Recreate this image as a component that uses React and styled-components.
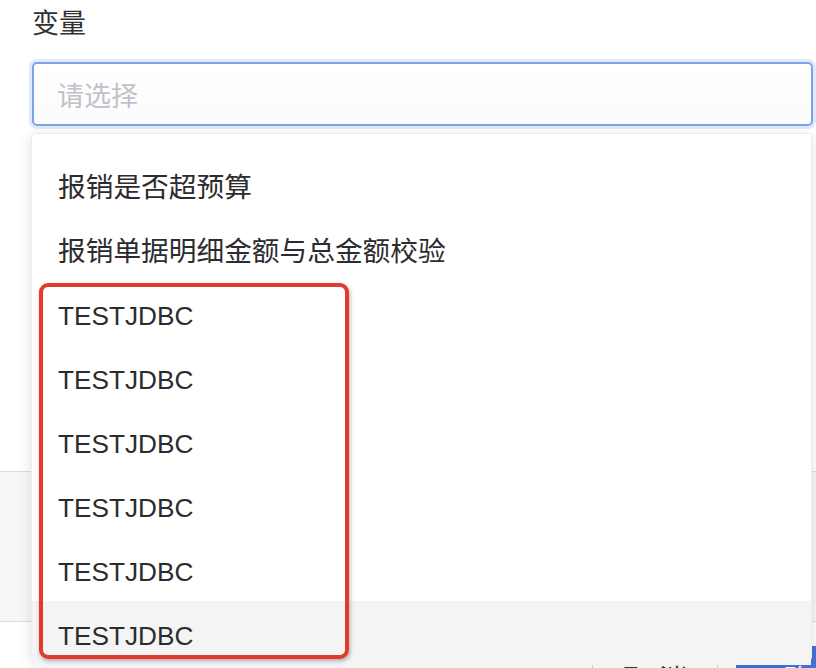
import React from "react";
import styled, { createGlobalStyle } from "styled-components";

const GlobalStyle = createGlobalStyle`
  html, body {
    margin: 0;
    padding: 0;
    background: #ffffff;
  }
  body {
    font-family: "Liberation Sans", "Noto Sans CJK SC", sans-serif;
  }
`;

const Page = styled.div`
  position: relative;
  width: 816px;
  height: 668px;
  overflow: hidden;
  background: #ffffff;
`;

const Field = styled.div`
  padding: 0 3px 0 32px;
`;

const Label = styled.div`
  font-size: 27px;
  line-height: 48px;
  color: #303133;
  margin-bottom: 14px;
`;

const SelectBox = styled.div`
  position: relative;
  height: 64px;
  box-sizing: border-box;
  border: 2px solid #7ba3e9;
  border-radius: 5px;
  box-shadow: 0 0 0 3px rgba(120, 160, 235, 0.22);
  display: flex;
  align-items: center;
  padding-left: 23px;
  background: linear-gradient(#ffffff, #fbfbfc);
`;

const Placeholder = styled.span`
  font-size: 27px;
  color: #bfc2c8;
`;

const Dropdown = styled.div`
  position: absolute;
  top: calc(100% + 9px);
  left: -3px;
  width: 781px;
  height: 528px;
  box-sizing: border-box;
  padding-bottom: 7px;
  background: #ffffff;
  border: 1px solid #eceef2;
  border-radius: 4px;
  box-shadow: 0 3px 14px rgba(0, 0, 0, 0.12);
  z-index: 10;
`;

const OptionList = styled.ul`
  list-style: none;
  margin: 0;
  padding: 19px 0 0;
  height: 100%;
  overflow: hidden;
`;

const Option = styled.li`
  height: 64px;
  box-sizing: border-box;
  display: flex;
  align-items: center;
  padding-left: 26px;
  padding-top: ${(p) => (p.$latin ? "6px" : "0")};
  font-size: ${(p) => (p.$latin ? "26.2px" : "27.7px")};
  color: #2c2c2e;
  background: ${(p) => (p.$hover ? "#f4f4f5" : "transparent")};
`;

const Highlight = styled.div`
  position: absolute;
  left: 7px;
  top: 149px;
  width: 310px;
  height: 376px;
  box-sizing: border-box;
  border: 4px solid #e23a2c;
  border-radius: 9px;
  box-shadow: 1px 2px 4px rgba(0, 0, 0, 0.3);
  pointer-events: none;
`;

const Band = styled.div`
  margin-top: 345px;
  height: 149px;
  border-top: 1px solid #dcdcdc;
  border-bottom: 1px solid #dcdcdc;
  background: #f7f7f8;
`;

const Footer = styled.div`
  display: flex;
  justify-content: flex-end;
  gap: 18px;
  margin-top: 24px;
  margin-right: -80px;
`;

const Button = styled.button`
  height: 64px;
  width: ${(p) => (p.$primary ? "160px" : "126px")};
  box-sizing: border-box;
  border: 1px solid ${(p) => (p.$primary ? "#4474d6" : "#d4d6da")};
  border-radius: 4px;
  background: ${(p) => (p.$primary ? "#4474d6" : "#ffffff")};
  color: ${(p) => (p.$primary ? "#ffffff" : "#3a3a3a")};
  font-family: "Liberation Sans", "Noto Sans CJK SC", sans-serif;
  font-size: 28px;
  padding: 0;
`;

const options = [
  { label: "报销是否超预算" },
  { label: "报销单据明细金额与总金额校验" },
  { label: "TESTJDBC", latin: true },
  { label: "TESTJDBC", latin: true },
  { label: "TESTJDBC", latin: true },
  { label: "TESTJDBC", latin: true },
  { label: "TESTJDBC", latin: true },
  { label: "TESTJDBC", latin: true, hover: true },
];

export default function App() {
  return (
    <Page>
      <GlobalStyle />
      <Field>
        <Label>变量</Label>
        <SelectBox>
          <Placeholder>请选择</Placeholder>
          <Dropdown>
            <OptionList>
              {options.map((o, i) => (
                <Option key={i} $latin={o.latin} $hover={o.hover}>
                  {o.label}
                </Option>
              ))}
            </OptionList>
            <Highlight />
          </Dropdown>
        </SelectBox>
      </Field>
      <Band />
      <Footer>
        <Button>取 消</Button>
        <Button $primary>确 定</Button>
      </Footer>
    </Page>
  );
}
